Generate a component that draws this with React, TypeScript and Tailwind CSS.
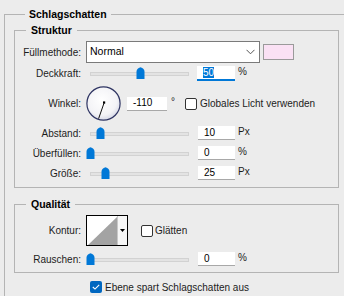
import React from 'react';

const FONT = "font-['Liberation_Sans',Arial,sans-serif]";

function Slider({ pos }: { pos: number }) {
  return (
    <div className="relative flex h-[20px] w-[112px] shrink-0 items-start">
      <div className="ml-[4px] mt-[9px] h-[4px] w-[99px] border border-[#d2d2d2] bg-[#e3e3e3]" />
      <svg className="absolute top-[4px]" style={{ left: pos }} width="9" height="12" viewBox="0 0 9 12">
        <path d="M0.5 12 V4.8 Q0.5 1.6 4.5 0.3 Q8.5 1.6 8.5 4.8 V12 Z" fill="#0078d7" />
      </svg>
    </div>
  );
}

function NumBox({ value, width = 'w-[37px]' }: { value: string; width?: string }) {
  return (
    <div className={`flex h-[14px] ${width} shrink-0 items-center border-b border-[#a8a8a8] bg-white pl-[6px] leading-none text-black`}>
      {value}
    </div>
  );
}

function Check({ checked = false }: { checked?: boolean }) {
  if (checked) {
    return (
      <div className="flex h-[12px] w-[12px] shrink-0 items-center justify-center rounded-[2px] bg-[#0067c0]">
        <svg width="8" height="6" viewBox="0 0 8 6">
          <path d="M0.8 3 L3 5.1 L7.2 0.8" stroke="#fff" strokeWidth="1.1" fill="none" />
        </svg>
      </div>
    );
  }
  return <div className="h-[12px] w-[12px] shrink-0 rounded-[2px] border border-[#333] bg-white" />;
}

function Label({ children }: { children: React.ReactNode }) {
  return <div className="w-[67px] shrink-0 pr-[1px] text-right">{children}</div>;
}

function SliderRow({ label, pos, value, unit, extra = '' }: { label: string; pos: number; value: string; unit: string; extra?: string }) {
  return (
    <div className={`flex h-[20px] items-center ${extra}`}>
      <Label>{label}</Label>
      <div className="ml-[4px]">
        <Slider pos={pos} />
      </div>
      <NumBox value={value} />
      <div className="mb-[3px] ml-[3px]">{unit}</div>
    </div>
  );
}

export default function App() {
  return (
    <div className={`h-[296px] w-[344px] overflow-hidden bg-[#ececec] text-[10px] text-[#1c1c1c] ${FONT}`}>
      <fieldset className="ml-[4px] mt-[7px] w-[360px] border border-[#b4b4b4] pb-[20px] pl-[9px]">
        <legend className="ml-[11px] px-[4px] text-[10.5px] font-bold leading-[14px] text-black">Schlagschatten</legend>

        {/* Struktur */}
        <fieldset className="mt-[2px] w-[325px] border border-[#b4b4b4] pb-[4px]">
          <legend className="ml-[11px] px-[5px] text-[10.5px] font-bold leading-[14px] text-black">Struktur</legend>

          <div className="mt-[4px] flex h-[22px] items-center">
            <Label>Füllmethode:</Label>
            <div className="ml-[4px] flex h-[22px] w-[174px] items-center justify-between border border-[#7a7a7a] bg-white pl-[3px] pr-[4px] text-[10.5px] text-black">
              <span>Normal</span>
              <svg width="9" height="6" viewBox="0 0 9 6">
                <path d="M0.5 0.8 L4.5 4.8 L8.5 0.8" stroke="#555" strokeWidth="1" fill="none" />
              </svg>
            </div>
            <div className="ml-[3px] h-[16px] w-[31px] border border-[#9a9a9a] bg-[#fae1f4]" />
          </div>

          <div className="flex h-[20px] items-center">
            <Label>Deckkraft:</Label>
            <div className="ml-[4px]">
              <Slider pos={50} />
            </div>
            <div className="-ml-[1px] flex h-[15px] w-[38px] items-start border-b-2 border-[#0078d7] bg-white pl-[6px] pt-[1px]">
              <span className="bg-[#0078d7] leading-[11px] text-white">50</span>
            </div>
            <div className="mb-[3px] ml-[3px]">%</div>
          </div>

          <div className="mt-[3px] flex h-[35px] items-center">
            <Label>Winkel:</Label>
            <svg className="ml-[4px] shrink-0" width="35" height="35" viewBox="0 0 35 35">
              <defs>
                <radialGradient id="dialFill" cx="0.45" cy="0.4" r="0.6">
                  <stop offset="0" stopColor="#ffffff" />
                  <stop offset="0.75" stopColor="#f3f3f6" />
                  <stop offset="1" stopColor="#d9dbe8" />
                </radialGradient>
              </defs>
              <circle cx="17.5" cy="17.5" r="16.6" fill="url(#dialFill)" stroke="#2e3462" strokeWidth="1.2" />
              <line x1="18.2" y1="16.6" x2="12.6" y2="32.6" stroke="#111" strokeWidth="1" />
              <rect x="17" y="15.4" width="2.2" height="2.2" fill="#000" />
            </svg>
            <div className="ml-[6px]">
              <NumBox value="-110" width="w-[40px]" />
            </div>
            <div className="mb-[5px] ml-[4px]">°</div>
            <div className="ml-[10px]">
              <Check />
            </div>
            <div className="ml-[3px] whitespace-nowrap">Globales Licht verwenden</div>
          </div>

          <SliderRow label="Abstand:" pos={10} value="10" unit="Px" extra="mt-[2px]" />
          <SliderRow label="Überfüllen:" pos={0} value="0" unit="%" />
          <SliderRow label="Größe:" pos={15} value="25" unit="Px" />
        </fieldset>

        {/* Qualität */}
        <fieldset className="mt-[9px] w-[325px] border border-[#b4b4b4] pb-[3px]">
          <legend className="ml-[11px] px-[5px] text-[10.5px] font-bold leading-[14px] text-black">Qualität</legend>

          <div className="mt-[4px] flex h-[31px] items-center">
            <Label>Kontur:</Label>
            <div className="ml-[4px] flex h-[31px] w-[42px] shrink-0 border border-black bg-white">
              <svg width="30" height="29" viewBox="0 0 30 29" className="shrink-0">
                <rect width="30" height="29" fill="#fff" />
                <polygon points="1,29 30,1 30,29" fill="#a3a3a3" />
              </svg>
              <div className="flex flex-1 items-center justify-center border-l border-[#c8c8c8] bg-[#f6f6f6]">
                <svg width="5" height="3" viewBox="0 0 5 3">
                  <polygon points="0,0 5,0 2.5,3" fill="#000" />
                </svg>
              </div>
            </div>
            <div className="ml-[13px]">
              <Check />
            </div>
            <div className="ml-[2px]">Glätten</div>
          </div>

          <SliderRow label="Rauschen:" pos={0} value="0" unit="%" extra="mt-[3px]" />
        </fieldset>

        <div className="ml-[76px] mt-[7px] flex h-[14px] items-center">
          <Check checked />
          <div className="ml-[3px] whitespace-nowrap">Ebene spart Schlagschatten aus</div>
        </div>
      </fieldset>
    </div>
  );
}
